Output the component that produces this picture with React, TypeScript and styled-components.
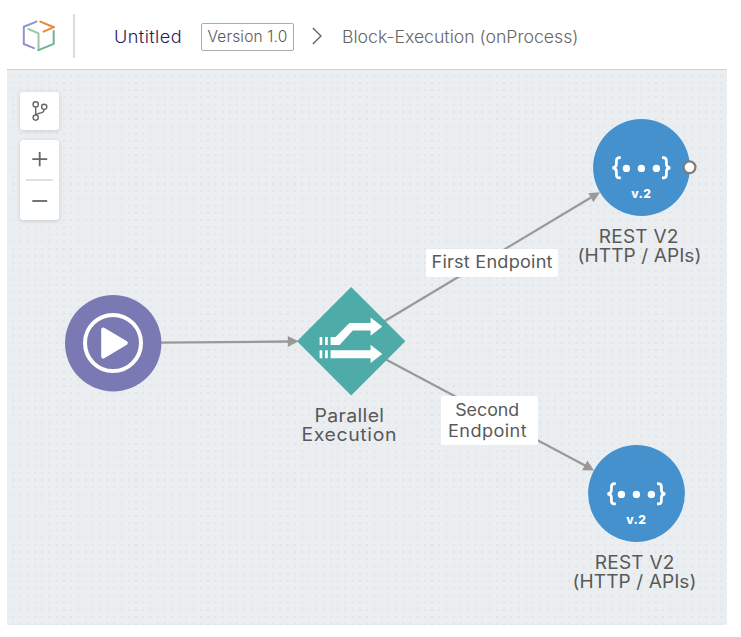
import React from 'react';
import styled, { createGlobalStyle } from 'styled-components';

const GlobalStyle = createGlobalStyle`
  * { box-sizing: border-box; }
  body { margin: 0; background: #fff; font-family: Inter, "Open Sans", sans-serif; color: #595959; }
`;

const Page = styled.main`
  display: flex;
  flex-direction: column;
  width: 720px;
  height: 625px;
  margin-left: 7px;
`;

const Header = styled.header`
  display: flex;
  align-items: center;
  flex: 0 0 70px;
  padding-top: 4px;
  border-bottom: 1px solid #cdcfd0;
`;

const Logo = styled.svg`
  width: 36px;
  height: 36px;
  margin: -1px 0 0 14px;
`;

const Divider = styled.div`
  width: 2px;
  height: 44px;
  margin: -1px 39px 0 16px;
  background: #dcdcdc;
`;

const Title = styled.h1`
  margin: 0;
  width: 87px;
  font-size: 16.8px;
  font-weight: 300;
  line-height: 24px;
  letter-spacing: 0.38px;
  transform: scaleX(1.08);
  transform-origin: left;
  color: #2b1a5a;
`;

const Version = styled.div`
  display: flex;
  align-items: center;
  justify-content: center;
  width: 93px;
  height: 28px;
  border: 1px solid #ababab;
  border-radius: 2px;
  font-size: 15.5px;
  font-weight: 300;
  letter-spacing: 0.17px;
  white-space: nowrap;
`;

const Chevron = styled.svg`
  width: 12px;
  height: 18px;
  margin: -1px 19px 0 17px;
`;

const Crumb = styled.span`
  font-size: 17px;
  font-weight: 300;
  line-height: 24px;
  transform: scaleX(1.038);
  transform-origin: left;
  white-space: nowrap;
  color: #666;
`;

const Canvas = styled.section`
  position: relative;
  flex: 1;
  background-color: #eaeef1;
  background-image: radial-gradient(circle, #dfe3e6 0.7px, transparent 1.4px);
  background-size: 7.22px 7.22px;
  background-position: 2.7px 2.1px;
  overflow: hidden;
`;

const Tools = styled.div`
  display: flex;
  flex-direction: column;
  gap: 10px;
  width: 39px;
  margin: 22px 0 0 13px;
`;

const ToolCard = styled.div`
  display: flex;
  flex-direction: column;
  align-items: center;
  background: #fff;
  border-radius: 3px;
  box-shadow: 0 1px 4px rgba(0, 0, 0, 0.14);
`;

const ToolButton = styled.button<{ $height: number }>`
  display: flex;
  align-items: center;
  justify-content: center;
  width: 39px;
  height: ${(p) => p.$height}px;
  padding: 0;
  border: 0;
  background: none;
`;

const ToolRule = styled.div`
  width: 27px;
  height: 2px;
  background: #e0e0e0;
`;

const Edges = styled.svg`
  position: absolute;
  inset: 0;
  width: 720px;
  height: 555px;
`;

const Node = styled.div<{ $x: number; $y: number; $width: number }>`
  position: absolute;
  left: ${(p) => p.$x}px;
  top: ${(p) => p.$y}px;
  width: ${(p) => p.$width}px;
  display: flex;
  flex-direction: column;
  align-items: center;
`;

const Shape = styled.svg<{ $size: number }>`
  display: block;
  flex: none;
  width: ${(p) => p.$size}px;
  height: ${(p) => p.$size}px;
  overflow: visible;
`;

const Caption = styled.div<{ $gap: number; $shift?: number }>`
  display: flex;
  flex-direction: column;
  align-items: center;
  margin-top: ${(p) => p.$gap}px;
  margin-right: ${(p) => p.$shift ?? 0}px;
  font-size: 18px;
  line-height: 19.3px;
`;

const Line = styled.span<{ $spacing: number; $stretch: number }>`
  letter-spacing: ${(p) => p.$spacing}px;
  transform: scaleX(${(p) => p.$stretch});
  white-space: nowrap;
`;

const EdgeLabel = styled.div<{ $x: number; $y: number; $width: number; $height: number; $inset?: number }>`
  position: absolute;
  left: ${(p) => p.$x}px;
  top: ${(p) => p.$y}px;
  width: ${(p) => p.$width}px;
  height: ${(p) => p.$height}px;
  display: flex;
  flex-direction: column;
  align-items: center;
  justify-content: center;
  padding-right: ${(p) => p.$inset ?? 0}px;
  border-radius: 2px;
  background: #fff;
  font-size: 16.8px;
  line-height: 20.5px;
`;

const VersionMark = styled.text`
  font: 800 12px Inter, sans-serif;
  letter-spacing: 0.4px;
  fill: #fff;
`;

function RestNode({ x, y, gap, port }: { x: number; y: number; gap: number; port?: boolean }) {
  return (
    <Node $x={x} $y={y} $width={130}>
      <Shape $size={97} viewBox="0 0 97 97">
        <circle cx="48.5" cy="48.5" r="48.4" fill="#4491cd" />
        <g fill="none" stroke="#fff" strokeWidth="2.7">
          <path d="M27.8 38.7h-1.2q-3.2 0-3.2 3.2v3.3q0 3.4-4 3.6q4 .2 4 3.6v3.3q0 3.2 3.2 3.2h1.2" />
          <path d="M69 38.7h1.2q3.2 0 3.2 3.2v3.3q0 3.4 4 3.6q-4 .2-4 3.6v3.3q0 3.2-3.2 3.2H69" />
        </g>
        <g fill="#fff">
          <circle cx="33.4" cy="49.4" r="3.7" />
          <circle cx="48.4" cy="49.4" r="3.7" />
          <circle cx="63.4" cy="49.4" r="3.7" />
        </g>
        <VersionMark x="48.3" y="79" textAnchor="middle">v.2</VersionMark>
        {port && <circle cx="96.5" cy="48.3" r="5.9" fill="#fff" stroke="#7d7d7d" strokeWidth="2.3" />}
      </Shape>
      <Caption $gap={gap} $shift={4.4}>
        <Line $spacing={0.2} $stretch={1.06}>REST V2</Line>
        <Line $spacing={0.07} $stretch={1.06}>(HTTP / APIs)</Line>
      </Caption>
    </Node>
  );
}

export default function App() {
  return (
    <>
      <GlobalStyle />
      <Page>
        <Header>
          <Logo viewBox="0 0 36 36" fill="none" strokeWidth="2" strokeLinecap="round" strokeLinejoin="round">
            <path d="M15.5 3.6L2.8 8.8V26L13 30.2" stroke="#9492c9" />
            <path d="M19.3 3.6L33 9.2L22.5 13.7" stroke="#e58a3b" />
            <path d="M7.3 11L17.5 15.4V32.2" stroke="#98c9a4" />
            <path d="M17.5 32.2L32.7 25.8V13" stroke="#6cb491" />
          </Logo>
          <Divider />
          <Title>Untitled</Title>
          <Version>Version 1.0</Version>
          <Chevron viewBox="0 0 12 18" fill="none" stroke="#666" strokeWidth="1.4">
            <path d="M1.8 1L10 9L1.8 17" />
          </Chevron>
          <Crumb>Block-Execution (onProcess)</Crumb>
        </Header>
        <Canvas>
          <Tools>
            <ToolCard>
              <ToolButton $height={38} aria-label="Branches">
                <svg width="18" height="22" viewBox="0 0 18 22" fill="none" stroke="#666" strokeWidth="1.4">
                  <circle cx="4.7" cy="4.4" r="2.6" />
                  <circle cx="4.7" cy="17.6" r="2.6" />
                  <circle cx="13.2" cy="6.8" r="2.6" />
                  <path d="M4.7 7V15M13.2 9.4C13.2 14.4 6 12.2 4.7 15" />
                </svg>
              </ToolButton>
            </ToolCard>
            <ToolCard>
              <ToolButton $height={39} aria-label="Zoom in">
                <svg width="16" height="16" viewBox="0 0 16 16" stroke="#666" strokeWidth="1.8">
                  <path d="M.3 7.2H15.2M7.7 0V14.3" />
                </svg>
              </ToolButton>
              <ToolRule />
              <ToolButton $height={39} aria-label="Zoom out">
                <svg width="16" height="16" viewBox="0 0 16 16" stroke="#666" strokeWidth="1.8">
                  <path d="M.3 8H15.2" />
                </svg>
              </ToolButton>
            </ToolCard>
          </Tools>

          <Edges viewBox="7 70 720 555">
            <g stroke="#999" strokeWidth="2.3">
              <path d="M160 342.6L289 341.5" />
              <path d="M384 321.5L591 197.5" />
              <path d="M385 359L586 466" />
            </g>
            <g fill="#999">
              <path d="M298.5 341.3L287.8 347V336Z" />
              <path d="M600 192.3L593.4 202.3L588.3 193.3Z" />
              <path d="M594 470.6L582.2 470.3L587.4 460.6Z" />
            </g>
          </Edges>

          <Node $x={41} $y={225} $width={130}>
            <Shape $size={97} viewBox="0 0 97 97">
              <circle cx="48.2" cy="48.2" r="48.2" fill="#7b79b4" />
              <circle cx="48" cy="48" r="28" fill="none" stroke="#fff" strokeWidth="4" />
              <path d="M38.2 34.5L60.8 48L38.2 61.5Z" fill="#fff" stroke="#fff" strokeWidth="4" strokeLinejoin="round" />
            </Shape>
          </Node>

          <Node $x={279.6} $y={216.7} $width={130}>
            <Shape $size={108.4} viewBox="0 0 108.4 108.4">
              <path d="M54.2 0L108.4 54.2L54.2 108.4L0 54.2Z" fill="#4eaba8" />
              <g fill="#fff">
                <path d="M22.6 50.1h2.7v8h-2.7zM28.1 50.1h2.7v8h-2.7zM22.6 63.2h2.7v8h-2.7zM28.1 63.2h2.7v8h-2.7z" />
                <path d="M33.6 50.1H38.6L52.4 35.9H73.6V30.6L85.3 39.6L73.6 48.7V43.5H55.8L42.6 58.1H33.6Z" />
                <path d="M33.6 63.2H73.6V57.8L85.3 67L73.6 76.1V71.2H33.6Z" />
              </g>
            </Shape>
          </Node>
          <Node $x={277.4} $y={335.8} $width={130}>
            <Caption $gap={0}>
              <Line $spacing={0.35} $stretch={1.08}>Parallel</Line>
              <Line $spacing={0.57} $stretch={1.08}>Execution</Line>
            </Caption>
          </Node>

          <RestNode x={569.3} y={49} gap={10.5} port />
          <RestNode x={564.6} y={375.4} gap={10.2} />

          <EdgeLabel $x={419} $y={178.7} $width={132} $height={28}>
            <Line $spacing={0.2} $stretch={1.08}>First Endpoint</Line>
          </EdgeLabel>
          <EdgeLabel $x={434} $y={326} $width={97} $height={49} $inset={4}>
            <Line $spacing={0} $stretch={1.06}>Second</Line>
            <Line $spacing={0.37} $stretch={1.08}>Endpoint</Line>
          </EdgeLabel>
        </Canvas>
      </Page>
    </>
  );
}
